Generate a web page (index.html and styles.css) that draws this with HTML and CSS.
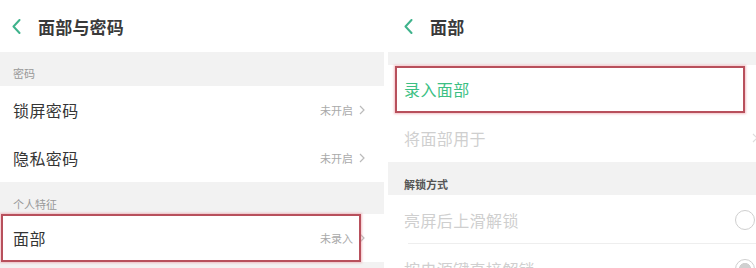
FILE: index.html
```html
<!DOCTYPE html>
<html lang="zh">
<head>
<meta charset="utf-8">
<link rel="stylesheet" href="styles.css">
</head>
<body>
<div class="screens">
  <section class="panel left">
    <header class="head">
      <svg class="back" width="9" height="15" viewBox="0 0 9 15"><polyline points="7.5,1 1.5,7.5 7.5,14" fill="none" stroke="#3fb38c" stroke-width="2" stroke-linecap="round" stroke-linejoin="round"/></svg>
      <span class="title">面部与密码</span>
    </header>
    <div class="group g1"><span class="glabel">密码</span></div>
    <div class="row">
      <span class="name">锁屏密码</span>
      <span class="val">未开启<svg class="arr" width="6" height="10" viewBox="0 0 6 10"><polyline points="1,1 5,5 1,9" fill="none" stroke="#bbb" stroke-width="1.2"/></svg></span>
    </div>
    <div class="row">
      <span class="name">隐私密码</span>
      <span class="val">未开启<svg class="arr" width="6" height="10" viewBox="0 0 6 10"><polyline points="1,1 5,5 1,9" fill="none" stroke="#bbb" stroke-width="1.2"/></svg></span>
    </div>
    <div class="group g2"><span class="glabel">个人特征</span></div>
    <div class="row mark mark-left">
      <span class="name">面部</span>
      <span class="val">未录入<svg class="arr" width="6" height="10" viewBox="0 0 6 10"><polyline points="1,1 5,5 1,9" fill="none" stroke="#bbb" stroke-width="1.2"/></svg></span>
    </div>
    <div class="foot"></div>
  </section>
  <section class="panel right">
    <header class="head">
      <svg class="back" width="9" height="15" viewBox="0 0 9 15"><polyline points="7.5,1 1.5,7.5 7.5,14" fill="none" stroke="#3fb38c" stroke-width="2" stroke-linecap="round" stroke-linejoin="round"/></svg>
      <span class="title">面部</span>
    </header>
    <div class="group g3"></div>
    <div class="row mark mark-right">
      <span class="name green">录入面部</span>
    </div>
    <div class="row">
      <span class="name faded">将面部用于</span>
      <svg class="arr edge" width="6" height="10" viewBox="0 0 6 10"><polyline points="1,1 5,5 1,9" fill="none" stroke="#ddd" stroke-width="1.2"/></svg>
    </div>
    <div class="group g4"><span class="glabel dark">解锁方式</span></div>
    <div class="row sep">
      <span class="name faded">亮屏后上滑解锁</span>
      <span class="radio"></span>
    </div>
    <div class="row">
      <span class="name faded">按电源键直接解锁</span>
      <span class="radio on"></span>
    </div>
  </section>
</div>
</body>
</html>
```

FILE: styles.css
```css
html, body {
  margin: 0;
  padding: 0;
  background: #fff;
  overflow: hidden;
}
body {
  width: 756px;
  height: 268px;
  font-family: "Noto Sans CJK SC", "Noto Sans", sans-serif;
  color: #333;
}
.screens {
  display: flex;
  gap: 4px;
  height: 268px;
}
.panel {
  display: flex;
  flex-direction: column;
  flex: none;
}
.left { width: 384px; }
.right { width: 368px; }

.head {
  height: 52px;
  display: flex;
  align-items: center;
  flex: none;
}
.left .head { padding-left: 12px; gap: 17px; }
.right .head { padding-left: 16px; gap: 17px; }
.back { display: block; margin-top: 1px; }
.title {
  font-size: 17px;
  font-weight: 700;
  color: #3a3a3a;
  letter-spacing: 0.2px;
}

.group {
  background: #f2f2f2;
  display: flex;
  align-items: flex-end;
  padding-left: 13px;
  box-sizing: border-box;
  flex: none;
}
.g1 { height: 34px; padding-bottom: 5px; }
.g2 { height: 32px; padding-bottom: 2px; }
.g3 { height: 13px; }
.g4 { height: 33px; padding-bottom: 3px; padding-left: 16px; }
.glabel {
  font-size: 11px;
  color: #999;
  line-height: 16px;
}
.glabel.dark { color: #555; font-weight: 700; }

.row {
  height: 48px;
  display: flex;
  align-items: center;
  justify-content: space-between;
  padding: 0 19px 0 13px;
  box-sizing: border-box;
  position: relative;
  flex: none;
}
.right .row { padding: 0 0 0 16px; height: 49px; }
.right .row.mark { height: 48px; }
.name {
  font-size: 16px;
  color: #353535;
  letter-spacing: 0.4px;
}
.name.green { color: #3cbf84; }
.name.faded { color: #cfcfcf; }
.val {
  font-size: 11px;
  color: #aaa;
  display: flex;
  align-items: center;
  gap: 6px;
}
.arr { display: block; }
.arr.edge { position: relative; left: 2px; }

.mark::after {
  content: "";
  position: absolute;
  border: 2px solid #b8505c;
  box-shadow: 0 0 2px 1px rgba(235, 150, 160, 0.6);
  pointer-events: none;
}
.mark-left::after { left: 1px; top: 0; width: 356px; height: 44px; }
.mark-right::after { left: 7px; top: 1px; width: 346px; height: 43px; }

.sep::before {
  content: "";
  position: absolute;
  left: 20px;
  right: 0;
  bottom: 0;
  border-bottom: 1px solid #eee;
}
.radio {
  width: 20px;
  height: 20px;
  border: 1.5px solid #cfcfcf;
  border-radius: 50%;
  box-sizing: border-box;
  margin-right: 1px;
  flex: none;
}
.radio.on {
  background: radial-gradient(circle, #d0d0d0 45%, #fff 50%);
}
.foot {
  flex: 1;
  background: #f2f2f2;
}
```
